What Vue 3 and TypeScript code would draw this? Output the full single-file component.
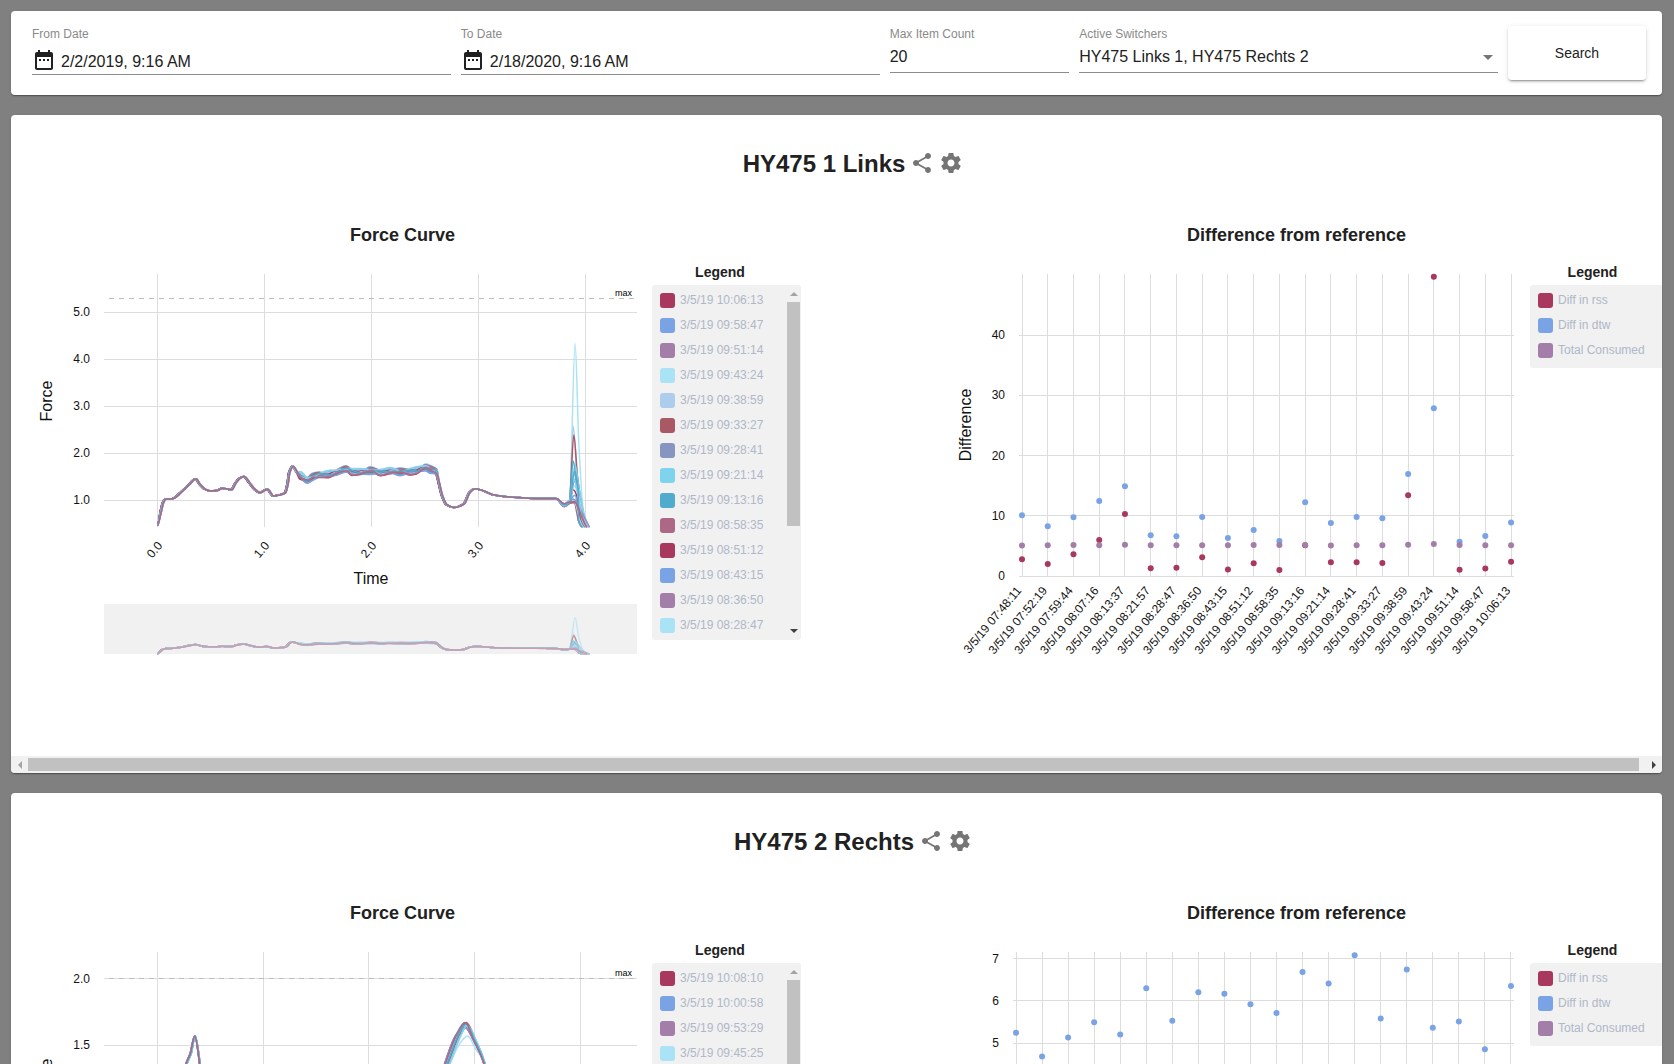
<script setup lang="ts">
import { ref } from 'vue'

type Point = [number, number]

interface LineSeries {
  color: string
  path: string
  brushPath: string
}

interface ForceChart {
  xStep: number
  yOne: number
  yUnit: number
  yTicks: number[]
  maxY: number
  series: LineSeries[]
}

interface ScatterChart {
  left: number
  step: number
  yUnit: number
  ticks: number[]
  labels: string[]
  rss: number[]
  dtw: number[]
  total: number[]
}

interface Switcher {
  id: string
  title: string
  force: ForceChart
  scatter: ScatterChart
  runs: string[]
}

const palette = ['#a8385d', '#7aa3e5', '#a27ea8', '#aae3f5', '#adcded', '#a95963', '#8796c0', '#7ed3ed', '#50abcc', '#ad6886']

const fromDate = ref('2/2/2019, 9:16 AM')
const toDate = ref('2/18/2020, 9:16 AM')
const maxItems = ref('20')
const activeSwitchers = ref('HY475 Links 1, HY475 Rechts 2')

const X0 = 146
const BOTTOM = 264
const SCATTER_BOTTOM = 313

function crisp(n: number): number {
  return Math.round(n - 0.5) + 0.5
}

/* Monotone spline through the points, so the curve never overshoots a sample. */
function smooth(points: Point[]): string {
  let d = `M${points[0][0].toFixed(1)},${points[0][1].toFixed(1)}`
  for (let i = 0; i < points.length - 1; i++) {
    const p0 = points[Math.max(i - 1, 0)]
    const p1 = points[i]
    const p2 = points[i + 1]
    const p3 = points[Math.min(i + 2, points.length - 1)]
    const w = (p2[0] - p1[0]) / 3
    const m1 = slope(p0, p1, p2)
    const m2 = slope(p1, p2, p3)
    d += `C${(p1[0] + w).toFixed(1)},${(p1[1] + m1 * w).toFixed(1)} ${(p2[0] - w).toFixed(1)},${(p2[1] - m2 * w).toFixed(1)} ${p2[0].toFixed(1)},${p2[1].toFixed(1)}`
  }
  return d
}

function slope(a: Point, b: Point, c: Point): number {
  const s0 = b[0] === a[0] ? 0 : (b[1] - a[1]) / (b[0] - a[0])
  const s1 = c[0] === b[0] ? 0 : (c[1] - b[1]) / (c[0] - b[0])
  if (s0 * s1 <= 0) return 0
  return (2 * s0 * s1) / (s0 + s1)
}

function toSeries(curves: Point[][], xStep: number, yOne: number, yUnit: number): LineSeries[] {
  return curves.map((curve, i) => {
    const main = curve.map(([t, v]): Point => [X0 + 0.5 + t * xStep, Math.min(BOTTOM, yOne - (v - 1) * yUnit)])
    const brush = main.map(([x, y]): Point => [x, 391 - (BOTTOM - y) * 0.198])
    return { color: palette[i % 10], path: smooth(main), brushPath: smooth(brush) }
  })
}

const baseCurve: Point[] = [
  [0, 0.46], [0.025, 0.76], [0.047, 0.95], [0.07, 1.02], [0.14, 1.035], [0.21, 1.16], [0.29, 1.33], [0.35, 1.45],
  [0.39, 1.33], [0.436, 1.23], [0.49, 1.19], [0.55, 1.2], [0.6, 1.25], [0.685, 1.22], [0.72, 1.35], [0.76, 1.46],
  [0.8, 1.5], [0.85, 1.375], [0.9, 1.23], [0.95, 1.155], [1.02, 1.23], [1.075, 1.085], [1.13, 1.105], [1.185, 1.15],
  [1.21, 1.35], [1.226, 1.59], [1.257, 1.72], [1.295, 1.6], [1.33, 1.52], [1.394, 1.43], [1.44, 1.49], [1.5, 1.53],
  [1.6, 1.55], [1.64, 1.57], [1.755, 1.655], [1.815, 1.6], [1.9, 1.6], [1.986, 1.63], [2.08, 1.59], [2.17, 1.62],
  [2.266, 1.6], [2.36, 1.61], [2.42, 1.63], [2.5, 1.7], [2.545, 1.65], [2.6, 1.6], [2.62, 1.4], [2.655, 1.08],
  [2.695, 0.9], [2.763, 0.84], [2.857, 0.92], [2.91, 1.16], [2.956, 1.24], [3.03, 1.205], [3.12, 1.12],
  [3.26, 1.07], [3.51, 1.035], [3.72, 1.03]
]

const peaks = [1.22, 1.6, 1.0, 4.33, 2.57, 2.38, 1.4, 1.75, 1.83, 0.98, 0.95, 1.1, 0.94, 1.0, 1.3, 0.96, 1.02, 1.45, 1.6, 0.95]

const linksCurves: Point[][] = peaks.map((peak, i) => {
  const spread = (((i * 7) % 11) / 10 - 0.5) * 0.1
  const body = baseCurve.map(([t, v]): Point => {
    const inBand = t > 1.3 && t < 2.61
    const shift = (i % 5) * 0.003
    return [t + (t > 0 ? shift : 0), inBand ? v + spread + 0.035 * Math.sin(t * 23 + i * 2) : v]
  })
  const peakX = 3.885 + (i % 4) * 0.006
  const end = 3.97 + (((i * 5) % 9) / 9) * 0.08
  body.push([3.8, 0.86 + (i % 4) * 0.02], [3.85, 0.93 + (i % 3) * 0.03], [peakX, peak])
  if (peak > 1.2) body.push([peakX + 0.035, 1 + (peak - 1) * 0.35])
  body.push([end - 0.035, 0.56], [end, 0.43])
  return body
})

const rechtsCurves: Point[][] = peaks.map((_, i) => {
  const s = (((i * 7) % 11) / 10 - 0.5) * 0.05
  const top = i === 3 ? 1.57 : 1.66 + ((i % 4) - 2) * 0.012
  return [
    [0, 0.35], [0.05, 0.8], [0.16, 0.95], [0.274 + s / 4, 1.36], [0.315 + s / 4, 1.44], [0.354 + s / 8, 1.57], [0.404 + s / 8, 1.34],
    [0.45, 0.9], [0.8, 0.8], [1.6, 0.82], [2.3, 0.9], [2.63, 1.12], [2.74 + s, 1.36], [2.85 + s, 1.58 - (i === 3 ? 0.05 : 0)],
    [2.92 + s / 2, top], [3.0 + s / 2, 1.54 - (i === 3 ? 0.07 : 0)], [3.095 + s / 4, 1.36], [3.2, 0.9], [3.6, 0.7], [4.0, 0.4]
  ]
})

const linksTimes = [
  '07:48:11', '07:52:19', '07:59:44', '08:07:16', '08:13:37', '08:21:57', '08:28:47', '08:36:50', '08:43:15', '08:51:12',
  '08:58:35', '09:13:16', '09:21:14', '09:28:41', '09:33:27', '09:38:59', '09:43:24', '09:51:14', '09:58:47', '10:06:13'
]
const rechtsTimes = [
  '07:50:22', '07:54:30', '08:01:55', '08:09:27', '08:15:48', '08:24:08', '08:30:58', '08:39:01', '08:45:26', '08:53:23',
  '09:00:46', '09:15:27', '09:23:25', '09:30:52', '09:35:38', '09:41:10', '09:45:25', '09:53:29', '10:00:58', '10:08:10'
]
const stamp = (time: string) => `3/5/19 ${time}`
const legendRuns = (times: string[]) => [...times].reverse().slice(0, 14).map(stamp)

const total = [5.05, 5.1, 5.15, 5.1, 5.2, 5.1, 5.1, 5.1, 5.1, 5.15, 5.15, 5.15, 5.05, 5.1, 5.1, 5.2, 5.3, 5.15, 5.1, 5.1]

const switchers: Switcher[] = [
  {
    id: 'links',
    title: 'HY475 1 Links',
    force: {
      xStep: 107, yOne: 237, yUnit: 47, yTicks: [5, 4, 3, 2, 1], maxY: 35.5,
      series: toSeries(linksCurves, 107, 237, 47)
    },
    scatter: {
      left: 117, step: 25.74, yUnit: 6.02, ticks: [0, 10, 20, 30, 40],
      labels: linksTimes.map(stamp),
      rss: [2.8, 2, 3.6, 6, 10.3, 1.3, 1.35, 3.1, 1.1, 2.1, 1, 5.1, 2.3, 2.3, 2.15, 13.4, 49.7, 1.05, 1.25, 2.35],
      dtw: [10.1, 8.25, 9.75, 12.45, 14.9, 6.75, 6.6, 9.8, 6.3, 7.65, 5.8, 12.25, 8.8, 9.8, 9.6, 16.95, 27.85, 5.7, 6.65, 8.9],
      total
    },
    runs: legendRuns(linksTimes)
  },
  {
    id: 'rechts',
    title: 'HY475 2 Rechts',
    force: {
      xStep: 105.7, yOne: 171, yUnit: 133.4, yTicks: [2, 1.5, 1, 0.5], maxY: 37.5,
      series: toSeries(rechtsCurves, 105.7, 171, 133.4)
    },
    scatter: {
      left: 111, step: 26.05, yUnit: 42.2, ticks: [0, 1, 2, 3, 4, 5, 6, 7],
      labels: rechtsTimes.map(stamp),
      rss: total.map((_, i) => 0.6 + (i % 4) * 0.3),
      dtw: [5.24, 4.68, 5.13, 5.49, 5.2, 6.3, 5.53, 6.2, 6.17, 5.92, 5.71, 6.68, 6.41, 7.08, 5.58, 6.74, 5.36, 5.51, 4.85, 6.35],
      total: total.map((_, i) => 2.4 + (i % 3) * 0.1)
    },
    runs: legendRuns(rechtsTimes)
  }
]

const scatterLegend = ['Diff in rss', 'Diff in dtw', 'Total Consumed']

function dots(chart: ScatterChart) {
  return [chart.rss, chart.dtw, chart.total].flatMap((values, s) =>
    values.map((v, i) => ({
      key: `${s}-${i}`,
      x: chart.left + i * chart.step,
      y: SCATTER_BOTTOM - v * chart.yUnit,
      color: palette[s]
    }))
  )
}
</script>

<template>
  <main class="page">
    <form class="card filters" @submit.prevent>
      <div class="field">
        <label for="from-date">From Date</label>
        <div class="control control-date">
          <svg class="icon" viewBox="0 0 24 24" aria-hidden="true"><path d="M9 11H7v2h2v-2zm4 0h-2v2h2v-2zm4 0h-2v2h2v-2zm2-7h-1V2h-2v2H8V2H6v2H5c-1.1 0-2 .9-2 2v14c0 1.1.9 2 2 2h14c1.1 0 2-.9 2-2V6c0-1.1-.9-2-2-2zm0 16H5V9h14v11z" /></svg>
          <input id="from-date" v-model="fromDate" type="text">
        </div>
      </div>
      <div class="field">
        <label for="to-date">To Date</label>
        <div class="control control-date">
          <svg class="icon" viewBox="0 0 24 24" aria-hidden="true"><path d="M9 11H7v2h2v-2zm4 0h-2v2h2v-2zm4 0h-2v2h2v-2zm2-7h-1V2h-2v2H8V2H6v2H5c-1.1 0-2 .9-2 2v14c0 1.1.9 2 2 2h14c1.1 0 2-.9 2-2V6c0-1.1-.9-2-2-2zm0 16H5V9h14v11z" /></svg>
          <input id="to-date" v-model="toDate" type="text">
        </div>
      </div>
      <div class="field">
        <label for="max-items">Max Item Count</label>
        <div class="control">
          <input id="max-items" v-model="maxItems" type="text" inputmode="numeric">
        </div>
      </div>
      <div class="field">
        <label for="switchers">Active Switchers</label>
        <div class="control">
          <select id="switchers" v-model="activeSwitchers">
            <option>HY475 Links 1, HY475 Rechts 2</option>
            <option>HY475 Links 1</option>
            <option>HY475 Rechts 2</option>
          </select>
          <svg class="caret" viewBox="0 0 10 5" aria-hidden="true"><path d="M0 0h10L5 5z" /></svg>
        </div>
      </div>
      <button class="search" type="submit">Search</button>
    </form>

    <section v-for="sw in switchers" :key="sw.id" class="card switcher">
      <div class="viewport">
        <div class="content">
          <header class="heading">
            <h2>{{ sw.title }}</h2>
            <button type="button" aria-label="Share">
              <svg viewBox="0 0 24 24"><path d="M18 16.08c-.76 0-1.44.3-1.96.77L8.91 12.7c.05-.23.09-.46.09-.7s-.04-.47-.09-.7l7.05-4.11c.54.5 1.25.81 2.04.81 1.66 0 3-1.34 3-3s-1.34-3-3-3-3 1.34-3 3c0 .24.04.47.09.7L8.04 9.81C7.5 9.31 6.79 9 6 9c-1.66 0-3 1.34-3 3s1.34 3 3 3c.79 0 1.5-.31 2.04-.81l7.12 4.16c-.05.21-.08.43-.08.65 0 1.61 1.31 2.92 2.92 2.92s2.92-1.31 2.92-2.92-1.31-2.92-2.92-2.92z" /></svg>
            </button>
            <button type="button" aria-label="Settings">
              <svg viewBox="0 0 24 24"><path d="M19.43 12.98c.04-.32.07-.64.07-.98s-.03-.66-.07-.98l2.11-1.65c.19-.15.24-.42.12-.64l-2-3.46c-.12-.22-.39-.3-.61-.22l-2.49 1c-.52-.4-1.08-.73-1.69-.98l-.38-2.65C14.46 2.18 14.25 2 14 2h-4c-.25 0-.46.18-.49.42l-.38 2.65c-.61.25-1.17.59-1.69.98l-2.49-1c-.23-.09-.49 0-.61.22l-2 3.46c-.13.22-.07.49.12.64l2.11 1.65c-.04.32-.07.65-.07.98s.03.66.07.98l-2.11 1.65c-.19.15-.24.42-.12.64l2 3.46c.12.22.39.3.61.22l2.49-1c.52.4 1.08.73 1.69.98l.38 2.65c.03.24.24.42.49.42h4c.25 0 .46-.18.49-.42l.38-2.65c.61-.25 1.17-.59 1.69-.98l2.49 1c.23.09.49 0 .61-.22l2-3.46c.12-.22.07-.49-.12-.64l-2.11-1.65zM12 15.5c-1.93 0-3.5-1.57-3.5-3.5s1.57-3.5 3.5-3.5 3.5 1.57 3.5 3.5-1.57 3.5-3.5 3.5z" /></svg>
            </button>
          </header>

          <div class="charts">
            <article class="chart">
              <h3>Force Curve</h3>
              <div class="chart-body">
                <svg class="plot" width="641" height="400" role="img" aria-label="Force over time">
                  <g class="grid">
                    <line v-for="n in 5" :key="`x${n}`" :x1="crisp(X0 + 0.5 + (n - 1) * sw.force.xStep)" :x2="crisp(X0 + 0.5 + (n - 1) * sw.force.xStep)" y1="11" :y2="BOTTOM" />
                    <line v-for="v in sw.force.yTicks" :key="`y${v}`" x1="93" x2="626" :y1="crisp(sw.force.yOne - (v - 1) * sw.force.yUnit)" :y2="crisp(sw.force.yOne - (v - 1) * sw.force.yUnit)" />
                  </g>
                  <line class="limit" x1="98" x2="623" :y1="sw.force.maxY" :y2="sw.force.maxY" />
                  <text class="limit-label" x="621" :y="sw.force.maxY - 3" text-anchor="end">max</text>
                  <text v-for="v in sw.force.yTicks" :key="`l${v}`" class="tick" x="79" :y="Math.round(sw.force.yOne - (v - 1) * sw.force.yUnit) + 4" text-anchor="end">{{ v.toFixed(1) }}</text>
                  <text v-for="n in 5" :key="`t${n}`" class="tick" text-anchor="end" :transform="`translate(${X0 + 6 + (n - 1) * sw.force.xStep} 283) rotate(-50)`">{{ (n - 1).toFixed(1) }}</text>
                  <text class="axis" x="360" y="321" text-anchor="middle">Time</text>
                  <text class="axis" transform="translate(41 138) rotate(-90)" text-anchor="middle">Force</text>
                  <g class="curves">
                    <path v-for="(s, i) in sw.force.series" :key="i" :d="s.path" :stroke="s.color" />
                  </g>
                  <rect class="brush" x="93" y="341" width="533" height="50" />
                  <g class="curves curves-muted">
                    <path v-for="(s, i) in sw.force.series" :key="i" :d="s.brushPath" :stroke="s.color" />
                  </g>
                </svg>
                <aside class="legend legend-runs">
                  <h4>Legend</h4>
                  <div class="legend-panel">
                    <ul>
                      <li v-for="(run, i) in sw.runs" :key="run">
                        <span class="swatch" :style="{ background: palette[i % 10] }"></span>{{ run }}
                      </li>
                    </ul>
                    <div class="vbar" aria-hidden="true">
                      <svg viewBox="0 0 8 4"><path class="dim" d="M0 4h8L4 0z" /></svg>
                      <span class="vthumb"></span>
                      <svg viewBox="0 0 8 4"><path d="M0 0h8L4 4z" /></svg>
                    </div>
                  </div>
                </aside>
              </div>
            </article>

            <article class="chart">
              <h3>Difference from reference</h3>
              <div class="chart-body">
                <svg class="plot" width="625" height="400" role="img" aria-label="Difference from reference per run">
                  <g class="grid">
                    <line v-for="(l, i) in sw.scatter.labels" :key="l" :x1="crisp(sw.scatter.left + i * sw.scatter.step)" :x2="crisp(sw.scatter.left + i * sw.scatter.step)" y1="11" :y2="SCATTER_BOTTOM" />
                    <line v-for="v in sw.scatter.ticks" :key="v" :x1="sw.scatter.left - 3" x2="609" :y1="crisp(SCATTER_BOTTOM - v * sw.scatter.yUnit)" :y2="crisp(SCATTER_BOTTOM - v * sw.scatter.yUnit)" />
                  </g>
                  <text v-for="v in sw.scatter.ticks" :key="v" class="tick" :x="sw.scatter.left - 17" :y="Math.round(SCATTER_BOTTOM - v * sw.scatter.yUnit) + 4" text-anchor="end">{{ v }}</text>
                  <text v-for="(l, i) in sw.scatter.labels" :key="l" class="tick" text-anchor="end" :transform="`translate(${sw.scatter.left + i * sw.scatter.step} 328) rotate(-50)`">{{ l }}</text>
                  <text class="axis" transform="translate(66 162) rotate(-90)" text-anchor="middle">Difference</text>
                  <circle v-for="dot in dots(sw.scatter)" :key="dot.key" :cx="dot.x" :cy="dot.y" r="3" :fill="dot.color" />
                </svg>
                <aside class="legend">
                  <h4>Legend</h4>
                  <div class="legend-panel">
                    <ul>
                      <li v-for="(name, i) in scatterLegend" :key="name">
                        <span class="swatch" :style="{ background: palette[i] }"></span>{{ name }}
                      </li>
                    </ul>
                  </div>
                </aside>
              </div>
            </article>
          </div>
        </div>
      </div>
      <div class="hbar" aria-hidden="true">
        <span class="hbtn"><svg viewBox="0 0 4 8"><path class="dim" d="M4 0v8L0 4z" /></svg></span>
        <span class="htrack"><span class="hthumb"></span></span>
        <span class="hbtn"><svg viewBox="0 0 4 8"><path d="M0 0v8l4-4z" /></svg></span>
      </div>
    </section>
  </main>
</template>

<style>
body {
  background: #808080;
}
</style>

<style scoped>
.page {
  box-sizing: border-box;
  height: 100vh;
  overflow-y: auto;
  scrollbar-width: none;
  padding: 11px 12px 20px 11px;
  background: #808080;
  color: #212121;
  font-family: "Liberation Sans", Arial, sans-serif;
}

.card {
  background: #fff;
  border-radius: 4px;
  box-shadow: 0 2px 1px -1px rgba(0, 0, 0, 0.2), 0 1px 1px rgba(0, 0, 0, 0.14), 0 1px 3px rgba(0, 0, 0, 0.12);
}

.filters {
  display: grid;
  grid-template-columns: 7fr 7fr 3fr 7fr 138px;
  gap: 10px;
  padding: 15px 16px 15px 21px;
}

.field {
  min-width: 0;
}

.field label {
  display: block;
  color: #8a8a8a;
  font-size: 12px;
  line-height: 16px;
}

.control {
  display: flex;
  align-items: center;
  gap: 5px;
  height: 30px;
  border-bottom: 1px solid #8c8c8c;
}

.control-date {
  box-sizing: border-box;
  height: 33px;
  padding-top: 4px;
}

.icon {
  flex: none;
  width: 24px;
  height: 24px;
  fill: #212121;
}

.control input,
.control select {
  flex: 1;
  min-width: 0;
  padding: 0;
  border: 0;
  outline: 0;
  appearance: none;
  background: none;
  color: #212121;
  font-family: inherit;
  font-size: 16px;
  line-height: 20px;
}

.control-date input {
  padding-top: 3px;
}

.caret {
  width: 10px;
  height: 5px;
  margin-right: 5px;
  fill: #757575;
}

.search {
  height: 54px;
  border: 0;
  border-radius: 4px;
  background: #fff;
  box-shadow: 0 3px 1px -2px rgba(0, 0, 0, 0.2), 0 2px 2px rgba(0, 0, 0, 0.14), 0 1px 5px rgba(0, 0, 0, 0.12);
  color: #212121;
  font-family: inherit;
  font-size: 14px;
}

.switcher {
  margin-top: 20px;
  overflow: hidden;
}

.viewport {
  overflow-x: auto;
  scrollbar-width: none;
}

.content {
  min-width: 1684px;
  padding: 32px 0 93px;
}

.heading {
  display: flex;
  align-items: center;
  justify-content: center;
  gap: 5px;
  margin-bottom: 44px;
}

.heading h2 {
  margin: 0;
  padding-top: 2px;
  font-size: 24px;
  line-height: 30px;
}

.heading button {
  width: 24px;
  height: 24px;
  padding: 0;
  border: 0;
  background: none;
}

.heading svg {
  display: block;
  width: 24px;
  height: 24px;
  fill: #757575;
}

.charts {
  display: flex;
  justify-content: space-between;
}

.chart {
  width: 790px;
}

.chart h3 {
  margin: 0 0 16px;
  padding-right: 7px;
  font-size: 18px;
  line-height: 24px;
  text-align: center;
}

.chart-body {
  display: flex;
  align-items: flex-start;
}

.plot {
  flex: none;
}

.grid line {
  stroke: #ddd;
  stroke-width: 1;
}

.limit {
  stroke: #bdbdbd;
  stroke-width: 1;
  stroke-dasharray: 5 5;
}

.limit-label {
  fill: #000;
  font-size: 9px;
}

.tick {
  fill: #111;
  font-size: 12px;
}

.axis {
  fill: #111;
  font-size: 16px;
}

.curves path {
  fill: none;
  stroke-width: 1.5;
}

.curves-muted {
  opacity: 0.6;
}

.brush {
  fill: #f1f1f1;
}

.legend {
  width: 149px;
}

.legend h4 {
  width: 125px;
  margin: 0 0 4px;
  font-size: 14px;
  line-height: 18px;
  text-align: center;
}

.legend-runs h4 {
  width: 136px;
}

.legend-panel {
  display: flex;
  justify-content: space-between;
  max-height: 355px;
  overflow: hidden;
  border-radius: 3px;
  background: #f1f1f1;
}

.legend ul {
  margin: 0;
  padding: 8px 0 0 8px;
  list-style: none;
}

.legend li {
  display: flex;
  align-items: center;
  gap: 5px;
  height: 15px;
  margin-bottom: 10px;
  color: #afb7c8;
  font-size: 12px;
  line-height: 15px;
  white-space: nowrap;
}

.swatch {
  width: 15px;
  height: 15px;
  border-radius: 3px;
}

.vbar {
  display: flex;
  flex-direction: column;
  align-items: center;
  width: 13px;
  height: 355px;
  margin-right: 1px;
}

.vbar svg {
  width: 8px;
  height: 4px;
  margin: 7px 0 6px;
}

.vbar svg:last-child {
  margin: auto 0 7px;
}

.vbar path,
.hbar path {
  fill: #404040;
}

.vbar .dim,
.hbar .dim {
  fill: #a3a3a3;
}

.vthumb {
  width: 13px;
  height: 224px;
  background: #c1c1c1;
}

.hbar {
  display: flex;
  height: 17px;
  background: #f1f1f1;
}

.hbtn {
  display: flex;
  align-items: center;
  justify-content: center;
  width: 17px;
}

.hbtn svg {
  width: 4px;
  height: 8px;
}

.htrack {
  flex: 1;
  padding: 2px 6px 2px 0;
}

.hthumb {
  display: block;
  height: 13px;
  background: #c1c1c1;
}
</style>
